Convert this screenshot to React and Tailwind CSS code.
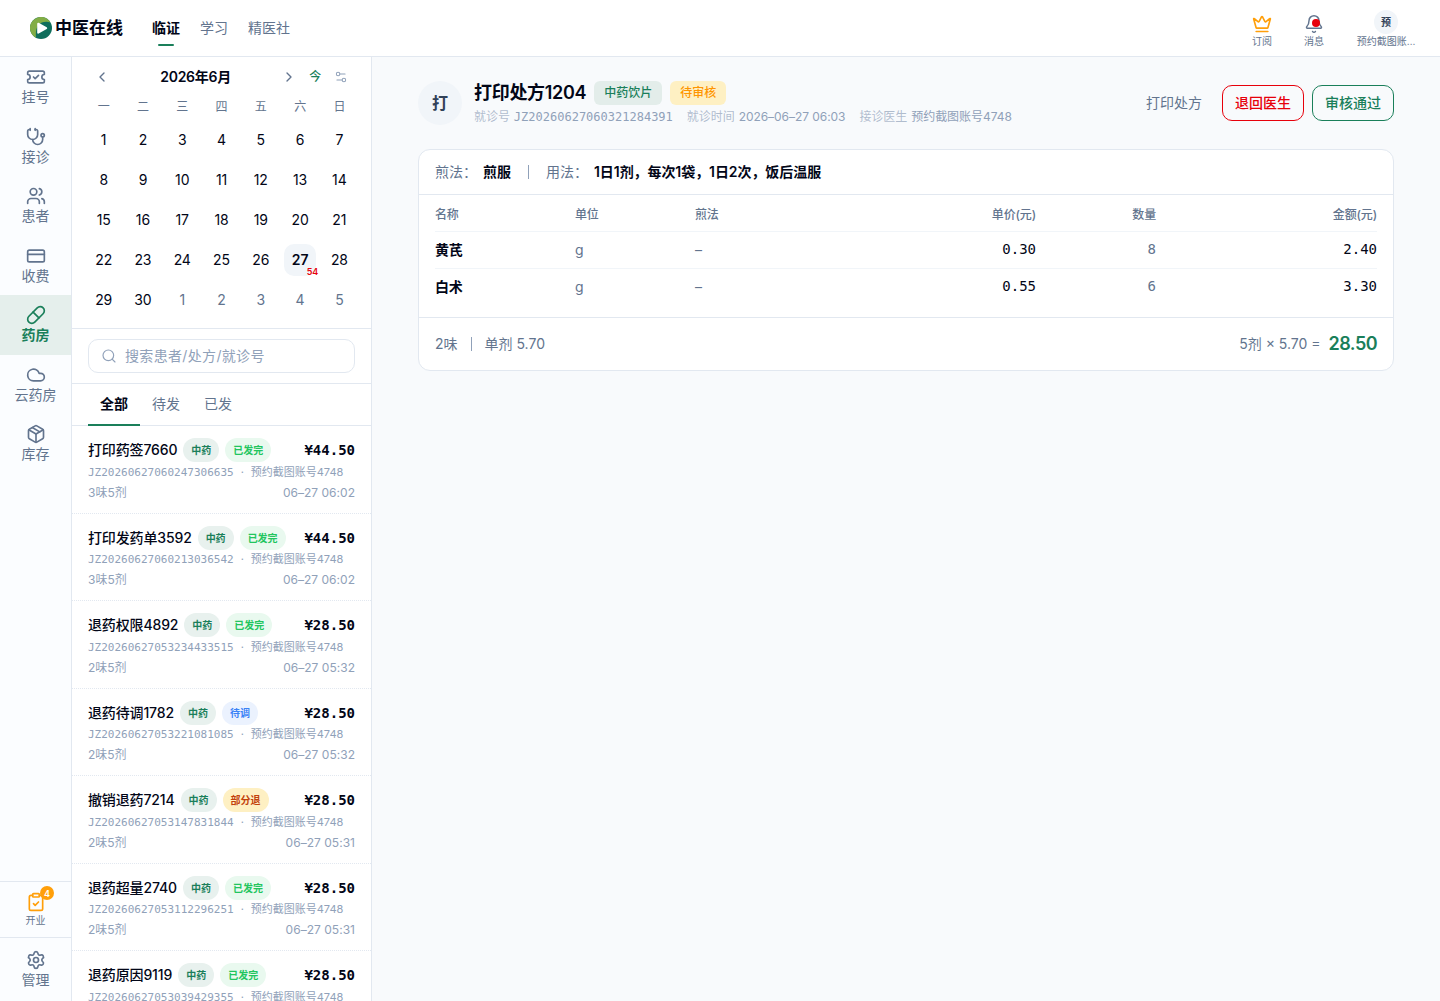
import React from 'react';
import {
    Stethoscope, Users, CreditCard, Pill, Cloud, Package, Settings, Search,
    ChevronLeft, ChevronRight, TicketCheck, ClipboardCheck, Crown, Bell, Settings2
} from 'lucide-react';

const SIDE_ITEMS = [
    { label: '挂号', icon: TicketCheck },
    { label: '接诊', icon: Stethoscope },
    { label: '患者', icon: Users },
    { label: '收费', icon: CreditCard },
    { label: '药房', icon: Pill, active: true },
    { label: '云药房', icon: Cloud },
    { label: '库存', icon: Package },
];

const STATUS_CLASS = {
    '已发完': 'bg-[#e9f9ef] text-[#22c55e]',
    '待调': 'bg-[#ebf2fe] text-[#3b82f6]',
    '部分退': 'bg-[#fef0c3] text-[#c2410c]',
};

const RECORDS = [
    { name: '打印药签7660', status: '已发完', price: '44.50', no: 'JZ20260627060247306635', count: '3味5剂', time: '06–27 06:02' },
    { name: '打印发药单3592', status: '已发完', price: '44.50', no: 'JZ20260627060213036542', count: '3味5剂', time: '06–27 06:02' },
    { name: '退药权限4892', status: '已发完', price: '28.50', no: 'JZ20260627053234433515', count: '2味5剂', time: '06–27 05:32' },
    { name: '退药待调1782', status: '待调', price: '28.50', no: 'JZ20260627053221081085', count: '2味5剂', time: '06–27 05:32' },
    { name: '撤销退药7214', status: '部分退', price: '28.50', no: 'JZ20260627053147831844', count: '2味5剂', time: '06–27 05:31' },
    { name: '退药超量2740', status: '已发完', price: '28.50', no: 'JZ20260627053112296251', count: '2味5剂', time: '06–27 05:31' },
    { name: '退药原因9119', status: '已发完', price: '28.50', no: 'JZ20260627053039429355', count: '2味5剂', time: '06–27 05:30' },
];

const HERBS = [
    { name: '黄芪', unit: 'g', price: '0.30', qty: 8, total: '2.40' },
    { name: '白术', unit: 'g', price: '0.55', qty: 6, total: '3.30' },
];

const App = () => (
    <div className="flex h-[1001px] w-full flex-col overflow-hidden bg-[#f8fafc] font-['Inter','Noto_Sans_CJK_SC',sans-serif] text-sm leading-[1.4] tracking-[-0.01em] text-[#020617]">
        <Header />
        <div className="flex min-h-0 flex-1">
            <Sidebar />
            <aside className="flex w-[300px] shrink-0 flex-col overflow-hidden border-r border-slate-200 bg-white">
                <Calendar />
                <div className="shrink-0 border-b border-slate-200 px-4 py-2.5">
                    <div className="flex h-[34px] items-center gap-2 rounded-[10px] border border-slate-200 px-3 text-slate-400">
                        <Search size={16} strokeWidth={1.75} />
                        <span className="tracking-[0.024em]">搜索患者/处方/就诊号</span>
                    </div>
                </div>
                <div className="flex h-[42px] shrink-0 border-b border-slate-200 px-4 tracking-normal">
                    <span className="-mb-px flex items-center border-b-2 border-[#1a7f5a] px-3 font-semibold">全部</span>
                    <span className="flex items-center px-3 pb-px text-slate-500">待发</span>
                    <span className="flex items-center px-3 pb-px text-slate-500">已发</span>
                </div>
                {RECORDS.map((r) => <RecordItem key={r.no} record={r} />)}
            </aside>
            <Prescription />
        </div>
    </div>
);

const Header = () => (
    <header className="flex h-[57px] shrink-0 items-center justify-between border-b border-slate-200 bg-white pr-6 pl-[30px] tracking-normal">
        <div className="flex h-full items-center">
            <Logo />
            <span className="mt-0.5 ml-[3px] text-[17px] font-bold">中医在线</span>
            <nav className="ml-[29px] flex h-full items-center gap-5 text-slate-500">
                <span className="relative font-semibold text-[#020617]">
                    临证
                    <i className="absolute -bottom-2 left-1.5 h-0.5 w-4 rounded-full bg-[#1a7f5a]" />
                </span>
                <span>学习</span>
                <span>精医社</span>
            </nav>
        </div>
        <div className="flex items-start pt-0.5 text-[10px] leading-3.5 text-slate-500">
            <div className="mr-8 flex w-5 flex-col items-center pt-1">
                <Crown size={20} className="text-[#ff9f0a]" />
                <span className="whitespace-nowrap">订阅</span>
            </div>
            <div className="relative mr-8 flex w-5 flex-col items-center pt-1">
                <Bell size={20} strokeWidth={1.75} />
                <i className="absolute top-[9px] left-2 size-2 rounded-full bg-[#e7000b]" />
                <span className="whitespace-nowrap">消息</span>
            </div>
            <div className="flex w-[60px] flex-col items-center">
                <span className="flex size-6 items-center justify-center rounded-full bg-slate-100 font-semibold text-slate-700">预</span>
                <span className="whitespace-nowrap">预约截图账…</span>
            </div>
        </div>
    </header>
);

const Logo = () => (
    <svg width="22" height="22" viewBox="0 0 22 22">
        <circle cx="11" cy="11" r="11" fill="#0f6e5c" />
        <path d="M6 20.800A11 11 0 1 1 20.500 5.500C16 4 11 5 8.500 8C6 11 5.500 16 6 20.800Z" fill="#82ad45" />
        <path d="M8.200 6.700V15.700L16.200 11.200Z" fill="#fff" stroke="#fff" strokeWidth="2" strokeLinejoin="round" />
    </svg>
);

const Sidebar = () => (
    <aside className="flex w-[72px] shrink-0 flex-col border-r border-slate-200 bg-[#fbfdff] tracking-normal text-slate-500">
        <div className="flex-1">
            {SIDE_ITEMS.map(({ label, icon: Icon, active }) => (
                <div key={label} className={`flex h-[59.5px] flex-col items-center pt-2.5 ${active ? 'bg-[#e5efec] font-semibold text-[#1a7f5a]' : ''}`}>
                    <Icon size={20} strokeWidth={2} />
                    <span>{label}</span>
                </div>
            ))}
        </div>
        <div className="relative flex h-[57px] flex-col items-center border-y border-slate-200 pt-2.5">
            <ClipboardCheck size={20} className="text-[#ff9f0a]" />
            <span className="absolute top-1 left-10 flex size-3.5 items-center justify-center rounded-full bg-[#ff9f0a] text-[9px] leading-none font-semibold text-white">4</span>
            <span className="mt-px text-[10px]">开业</span>
        </div>
        <div className="flex h-[63px] flex-col items-center pt-3">
            <Settings size={20} strokeWidth={2} />
            <span>管理</span>
        </div>
    </aside>
);

const Calendar = () => (
    <section className="h-[272px] shrink-0 border-b border-slate-200 px-3">
        <div className="flex h-10 items-center">
            <ChevronLeft size={16} className="ml-2.5 text-slate-500" />
            <span className="flex-1 text-center font-semibold tracking-[-0.02em]">2026年6月</span>
            <ChevronRight size={16} className="text-slate-500" />
            <span className="ml-3 text-xs font-medium text-[#1a7f5a]">今</span>
            <Settings2 size={14} strokeWidth={1.75} className="mr-[11px] ml-[13px] text-slate-400" />
        </div>
        <div className="grid h-5 grid-cols-7 items-center text-center text-xs text-slate-500">
            {['一', '二', '三', '四', '五', '六', '日'].map((d) => <span key={d}>{d}</span>)}
        </div>
        <div className="mt-[3px] grid grid-cols-7">
            {Array.from({ length: 35 }, (_, i) => {
                const day = i < 30 ? i + 1 : i - 29;
                const today = i === 26;
                return (
                    <div key={i} className={`flex h-10 items-center justify-center ${i >= 30 ? 'text-slate-500' : ''}`}>
                        <span className={`relative flex size-8 items-center justify-center rounded-[10px] ${today ? 'bg-slate-100 font-semibold' : ''}`}>
                            {day}
                            {today && <b className="absolute -right-0.5 -bottom-px text-[9px] leading-[10px] font-semibold text-[#e7000b]">54</b>}
                        </span>
                    </div>
                );
            })}
        </div>
    </section>
);

const RecordItem = ({ record }) => (
    <div className="h-[87.5px] shrink-0 border-b border-dotted border-slate-200 px-4 pt-3 text-slate-400">
        <div className="flex h-6 items-center gap-1.5 text-[10px] font-semibold">
            <span className="text-sm font-medium text-[#020617]">{record.name}</span>
            <span className="flex h-6 items-center rounded-full bg-[#e8f1ee] px-2 tracking-normal text-[#1a7f5a]">中药</span>
            <span className={`flex h-6 items-center rounded-full px-2 tracking-normal ${STATUS_CLASS[record.status]}`}>{record.status}</span>
            <span className="ml-auto font-['DejaVu_Sans_Mono',monospace] text-sm font-bold tracking-normal text-[#020617]">¥{record.price}</span>
        </div>
        <div className="mt-0.5 flex h-[17px] items-center text-[11px] whitespace-pre">
            <span className="font-['DejaVu_Sans_Mono',monospace] tracking-normal">{record.no}</span>
            <span className="w-[17px] text-center">·</span>
            <span className="tracking-normal">预约截图账号4748</span>
        </div>
        <div className="mt-[3px] flex h-[17px] items-center justify-between text-xs">
            <span className="tracking-normal">{record.count}</span>
            <span className="tracking-[0.002em]">{record.time}</span>
        </div>
    </div>
);

const Prescription = () => (
    <main className="min-w-0 flex-1 px-[46px] pt-6">
        <div className="flex h-11 items-center">
            <span className="flex size-11 items-center justify-center rounded-full bg-slate-100 text-base font-semibold text-slate-700">打</span>
            <div className="ml-3">
                <div className="flex h-6 items-center gap-2 text-xs font-medium tracking-normal">
                    <h1 className="text-lg leading-6 font-semibold tracking-[-0.017em]">打印处方1204</h1>
                    <span className="flex h-6 items-center rounded-md bg-[#e3edea] px-2.5 text-[#1a7f5a]">中药饮片</span>
                    <span className="flex h-6 items-center rounded-md bg-[#fef0c3] px-2.5 text-[#ff9500]">待审核</span>
                </div>
                <div className="mt-1 flex h-[17px] items-center gap-3.5 text-xs tracking-[-0.004em] text-slate-400">
                    <Meta label="就诊号"><span className="font-['DejaVu_Sans_Mono',monospace] tracking-normal">JZ20260627060321284391</span></Meta>
                    <Meta label="就诊时间">2026–06–27 06:03</Meta>
                    <Meta label="接诊医生">预约截图账号4748</Meta>
                </div>
            </div>
            <div className="ml-auto flex items-center gap-2 font-medium tracking-normal">
                <span className="mr-3 font-normal text-slate-500">打印处方</span>
                <button className="h-9 rounded-[10px] border border-[#e7000b] px-3 text-[#e7000b]">退回医生</button>
                <button className="h-9 rounded-[10px] border border-[#1a7f5a] px-3 text-[#1a7f5a]">审核通过</button>
            </div>
        </div>

        <section className="mt-6 rounded-xl border border-slate-200 bg-white">
            <div className="flex h-[45px] items-center border-b border-slate-200 px-4 tracking-normal text-slate-500">
                <span>煎法：</span>
                <b className="ml-1.5 font-semibold text-[#020617]">煎服</b>
                <i className="mx-[17px] h-3.5 w-px bg-slate-400" />
                <span>用法：</span>
                <b className="ml-1.5 font-semibold tracking-[-0.005em] text-[#020617]">1日1剂，每次1袋，1日2次，饭后温服</b>
            </div>
            <div className="px-4 pb-[11px]">
                <table className="w-full table-fixed border-separate border-spacing-0">
                    <thead>
                        <tr className="h-[37px] text-left text-xs text-slate-500 *:border-b *:border-slate-100 *:pt-[3px] *:font-medium">
                            <th className="w-[140px]">名称</th>
                            <th className="w-[120px]">单位</th>
                            <th className="w-[200px]">煎法</th>
                            <th className="w-[141px] text-right">单价(元)</th>
                            <th className="w-[120px] text-right">数量</th>
                            <th className="text-right">金额(元)</th>
                        </tr>
                    </thead>
                    <tbody>
                        {HERBS.map((h) => (
                            <tr key={h.name} className="h-[37px] text-slate-500 *:border-b *:border-slate-100 last:*:border-transparent">
                                <td className="font-semibold text-[#020617]">{h.name}</td>
                                <td>{h.unit}</td>
                                <td>–</td>
                                <td className="text-right font-['DejaVu_Sans_Mono',monospace] tracking-normal text-[#020617]">{h.price}</td>
                                <td className="text-right font-['DejaVu_Sans_Mono',monospace] tracking-normal">{h.qty}</td>
                                <td className="text-right font-['DejaVu_Sans_Mono',monospace] tracking-normal text-[#020617]">{h.total}</td>
                            </tr>
                        ))}
                    </tbody>
                </table>
            </div>
            <div className="flex h-[53px] items-center border-t border-slate-200 px-4 tracking-normal text-slate-500">
                <span>2味</span>
                <i className="mx-[13px] h-3.5 w-px bg-slate-400" />
                <span>单剂 5.70</span>
                <span className="ml-auto">5剂 × 5.70 =</span>
                <b className="ml-2 text-lg font-semibold tracking-[-0.03em] text-[#1a7f5a]">28.50</b>
            </div>
        </section>
    </main>
);

const Meta = ({ label, children }) => (
    <span className="flex items-center gap-1 whitespace-nowrap">
        <span className="text-slate-400/70">{label}</span>
        <span>{children}</span>
    </span>
);

export default App;
